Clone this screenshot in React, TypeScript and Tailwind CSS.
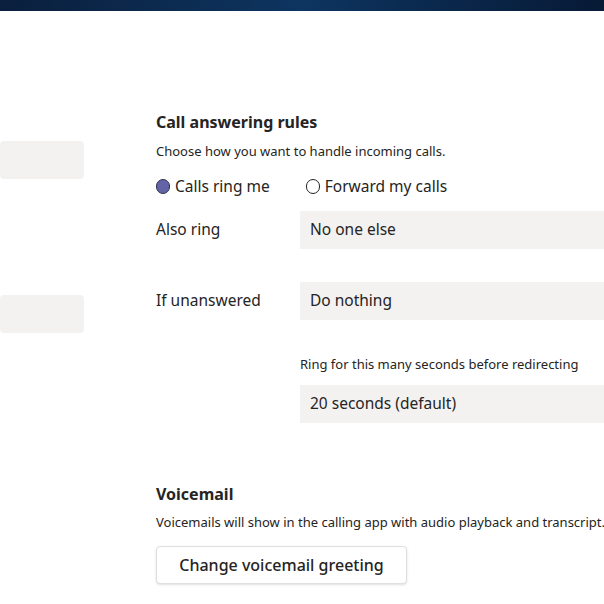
export default function App() {
  const font = { fontFamily: '"Noto Sans", "Open Sans", sans-serif' };
  return (
    <div className="w-[604px] h-[604px] overflow-hidden bg-white text-[#252423]" style={font}>
      <div className="h-[11px] bg-gradient-to-r from-[#0a1f3d] via-[#0d3560] to-[#071a36]" />
      <div className="flex">
        <div className="w-[84px] shrink-0">
          <div className="mt-[130px] h-[38px] rounded bg-[#f3f2f1]" />
          <div className="mt-[116px] h-[38px] rounded bg-[#f3f2f1]" />
        </div>
        <div className="ml-[72px] flex-1 pt-[100px] whitespace-nowrap">
          <h2 className="text-[16px] font-bold leading-[22px]">Call answering rules</h2>
          <p className="mt-[9px] text-[13px] leading-[18px]">Choose how you want to handle incoming calls.</p>
          <div className="mt-[16px] flex items-center gap-9 text-[15.5px] leading-[20px]">
            <label className="flex items-center gap-[5px]">
              <span className="w-[14px] h-[15px] rounded-full bg-[#6264a7] border border-[#33344a]" />
              Calls ring me
            </label>
            <label className="flex items-center gap-[5px]">
              <span className="w-[14px] h-[15px] rounded-full border border-[#252423]" />
              Forward my calls
            </label>
          </div>
          <div className="mt-[15px] flex items-center text-[15.5px]">
            <span className="w-[144px]">Also ring</span>
            <div className="flex-1 h-[38px] bg-[#f3f2f1] px-[10px] flex items-center">No one else</div>
          </div>
          <div className="mt-[33px] flex items-center text-[15.5px]">
            <span className="w-[144px]">If unanswered</span>
            <div className="flex-1 h-[38px] bg-[#f3f2f1] px-[10px] flex items-center">Do nothing</div>
          </div>
          <div className="ml-[144px]">
            <p className="mt-[35px] text-[13px] leading-[18px]">Ring for this many seconds before redirecting</p>
            <div className="mt-[12px] h-[38px] bg-[#f3f2f1] px-[10px] flex items-center text-[15.5px]">20 seconds (default)</div>
          </div>
          <h2 className="mt-[60px] text-[16px] font-bold leading-[22px]">Voicemail</h2>
          <p className="mt-[8px] text-[13px] leading-[18px]">Voicemails will show in the calling app with audio playback and transcript.</p>
          <button className="mt-[15px] w-[251px] h-[38px] border border-[#e1dfdd] rounded bg-white shadow-sm text-[16px] font-medium">
            Change voicemail greeting
          </button>
        </div>
      </div>
    </div>
  );
}
